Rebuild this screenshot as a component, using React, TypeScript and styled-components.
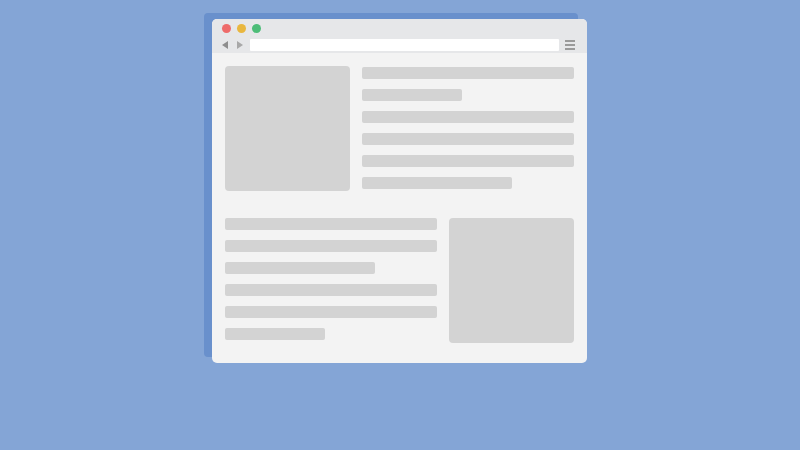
import React from "react";
import styled, { createGlobalStyle } from "styled-components";

const Global = createGlobalStyle`
  html, body { margin: 0; padding: 0; background: #84a5d6; }
  body { width: 800px; height: 450px; overflow: hidden; font-family: "Liberation Sans", Arial, sans-serif; }
`;

const Stage = styled.div`
  width: 800px;
  height: 450px;
  padding: 19px 0 0 212px;
  box-sizing: border-box;
`;

const WindowWrap = styled.div`
  position: relative;
  width: 375px;
  &::before {
    content: "";
    position: absolute;
    left: -8px;
    top: -6px;
    width: 374px;
    height: 344px;
    background: #6990cc;
    border-radius: 4px;
  }
`;

const Window = styled.div`
  position: relative;
  width: 375px;
  height: 344px;
  background: #f3f3f3;
  border-radius: 5px;
  overflow: hidden;
  display: flex;
  flex-direction: column;
`;

const Header = styled.div`
  height: 34px;
  background: #e6e7e9;
  box-sizing: border-box;
  padding: 5px 12px 0 9px;
  display: flex;
  flex-direction: column;
  gap: 6px;
`;

const Dots = styled.div`
  display: flex;
  gap: 6px;
  padding-left: 1px;
`;

const Dot = styled.span<{ $c: string }>`
  width: 9px;
  height: 9px;
  border-radius: 50%;
  background: ${(p) => p.$c};
`;

const Nav = styled.div`
  display: flex;
  align-items: center;
  height: 12px;
`;

const Arrows = styled.div`
  display: flex;
  align-items: center;
  gap: 9px;
  width: 28px;
  padding-left: 1px;
`;

const Url = styled.div`
  width: 310px;
  height: 12px;
  background: #ffffff;
  border-radius: 1px;
`;

const Menu = styled.div`
  margin-left: 6px;
  display: flex;
  flex-direction: column;
  gap: 2px;
`;

const MenuLine = styled.span`
  width: 10px;
  height: 2px;
  background: #9a9a9a;
`;

const Content = styled.div`
  padding: 13px 13px 0 13px;
  display: flex;
  flex-direction: column;
  gap: 27px;
`;

const Row = styled.div`
  display: flex;
  gap: 12px;
`;

const Image = styled.div`
  width: 125px;
  height: 125px;
  background: #d3d3d3;
  border-radius: 4px;
  flex: none;
`;

const Lines = styled.div<{ $offset?: number }>`
  width: 212px;
  display: flex;
  flex-direction: column;
  gap: 10px;
  padding-top: ${(p) => p.$offset ?? 0}px;
`;

const Line = styled.div<{ $w?: number }>`
  width: ${(p) => p.$w ?? 212}px;
  height: 12px;
  background: #d3d3d3;
  border-radius: 2px;
`;

const Arrow = ({ dir }: { dir: "l" | "r" }) => (
  <svg width="6" height="8" viewBox="0 0 6 8">
    {dir === "l" ? (
      <polygon points="6,0 6,8 0,4" fill="#8e8e8e" />
    ) : (
      <polygon points="0,0 0,8 6,4" fill="#a8a8a8" />
    )}
  </svg>
);

export default function App() {
  return (
    <>
      <Global />
      <Stage>
        <WindowWrap>
          <Window>
            <Header>
              <Dots>
                <Dot $c="#ee6b6a" />
                <Dot $c="#e9b73f" />
                <Dot $c="#4dbd78" />
              </Dots>
              <Nav>
                <Arrows>
                  <Arrow dir="l" />
                  <Arrow dir="r" />
                </Arrows>
                <Url />
                <Menu>
                  <MenuLine />
                  <MenuLine />
                  <MenuLine />
                </Menu>
              </Nav>
            </Header>
            <Content>
              <Row>
                <Image />
                <Lines $offset={1}>
                  <Line />
                  <Line $w={100} />
                  <Line />
                  <Line />
                  <Line />
                  <Line $w={150} />
                </Lines>
              </Row>
              <Row>
                <Lines>
                  <Line />
                  <Line />
                  <Line $w={150} />
                  <Line />
                  <Line />
                  <Line $w={100} />
                </Lines>
                <Image />
              </Row>
            </Content>
          </Window>
        </WindowWrap>
      </Stage>
    </>
  );
}
